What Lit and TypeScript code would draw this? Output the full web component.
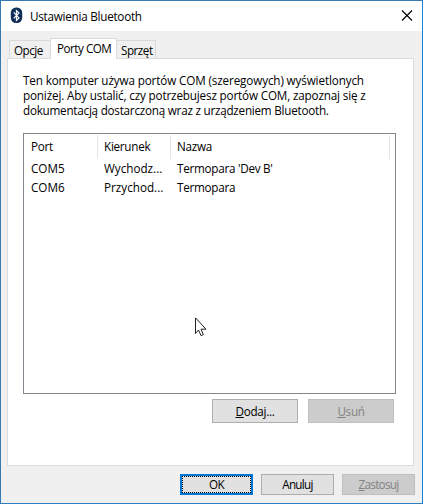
import { LitElement, html, css } from "lit";
import { customElement } from "lit/decorators.js";

@customElement("app-root")
export class AppRoot extends LitElement {
  static styles = css`
    :host {
      display: block;
      width: 423px;
      height: 504px;
      font: 11.7px/15px "Open Sans", "Noto Sans", sans-serif;
      letter-spacing: -0.16px;
      color: #000;
      cursor: default;
    }
    * { box-sizing: border-box; }
    .window {
      height: 504px;
      border: 1px solid #1979ca;
      border-color: #3579b5 #1683d8 #2f7fc0 #3579b5;
      background: #f0f0f0;
      display: flex;
      flex-direction: column;
      position: relative;
    }
    .title {
      height: 30px;
      background: #fff;
      display: flex;
      align-items: center;
      padding: 0 9px 0 9px;
      flex: none;
    }
    .title .name { margin-left: 7px; flex: 1; letter-spacing: -0.25px; white-space: nowrap; }
    svg { display: block; flex: none; }
    .logo { margin-bottom: 2px; }
    .tabs { display: flex; align-items: flex-end; padding: 7px 0 0 8px; height: 27px; flex: none; letter-spacing: -0.5px; }
    .tab {
      height: 18px;
      border: 1px solid #d9d9d9;
      border-bottom: 0;
      line-height: 18px;
      padding-left: 4px;
      white-space: nowrap;
    }
    .t1 { width: 41px; border-right: 0; }
    .t3 { width: 39px; border-left: 0; }
    .active {
      width: 67px;
      height: 21px;
      background: #fff;
      padding-left: 6px;
      margin-bottom: -1px;
      line-height: 18px;
      z-index: 1;
    }
    .panel {
      height: 408px;
      width: 407px;
      margin-left: 6px;
      border: 1px solid #dcdcdc;
      background: #fff;
      padding: 14px 0 0 15px;
      flex: none;
    }
    .line { height: 15px; white-space: nowrap; }
    .first { letter-spacing: -0.13px; }
    .tight { letter-spacing: -0.24px; }
    .list {
      margin-top: 15px;
      width: 373px;
      height: 261px;
      border: 1px solid #828790;
      padding-top: 1px;
    }
    .row { display: grid; grid-template-columns: 74px 73px 219px; height: 19px; line-height: 19px; white-space: nowrap; letter-spacing: -0.27px; }
    .row span { padding-left: 7px; }
    .row span + span { padding-left: 6px; }
    .row .wide { letter-spacing: 0; }
    .head { height: 24px; line-height: 23px; }
    .head span { border-right: 1px solid #e5e5e5; }
    .actions { display: flex; gap: 10px; margin: 5px 0 0 189px; letter-spacing: -0.3px; }
    .btn {
      border: 1px solid #adadad;
      background: #e1e1e1;
      display: flex;
      align-items: center;
      justify-content: center;
      width: 73px;
      height: 21px;
      white-space: pre;
    }
    .actions .btn { width: 86px; height: 24px; }
    .off { background: #ccc; border-color: #bfbfbf; color: #838383; }
    .default { border: 2px solid #0078d7; padding: 0; }
    .focus { width: 100%; height: 100%; border: 1px dotted #000; display: flex; align-items: center; justify-content: center; }
    .footer { display: flex; gap: 8px; margin: 8px 0 0 179px; letter-spacing: -0.7px; }
    u { text-underline-offset: 1px; text-decoration-thickness: 1px; text-decoration-skip-ink: none; }
    .pointer { position: absolute; left: 193px; top: 316px; }
  `;

  render() {
    return html`
      <div class="window">
        <div class="title">
          <svg class="logo" width="13" height="17" viewBox="0 0 13 17">
            <rect x="0.8" y="0.6" width="11.4" height="15.4" rx="5.2" fill="#0d2d58" />
            <path d="M3.7 5.4L9 11L6.4 13.4V3.5L9 6L3.7 11.4" fill="none" stroke="#fff" stroke-width="1.1" />
          </svg>
          <span class="name">Ustawienia Bluetooth</span>
          <svg width="14" height="12" viewBox="0 0 14 12">
            <path d="M3 .5L13 10.5M13 .5L3 10.5" stroke="#000" stroke-width="1.1" />
          </svg>
        </div>
        <div class="tabs">
          <div class="tab t1">Opcje</div>
          <div class="tab active">Porty COM</div>
          <div class="tab t3">Sprzęt</div>
        </div>
        <div class="panel">
          <div class="line first"><span>Ten komputer używa portów COM (szeregowych) wyświetlonych</span></div>
          <div class="line"><span>poniżej. Aby ustalić, czy potrzebujesz portów COM, zapoznaj się z</span></div>
          <div class="line tight"><span>dokumentacją dostarczoną wraz z urządzeniem Bluetooth.</span></div>
          <div class="list">
            <div class="row head"><span>Port</span><span>Kierunek</span><span>Nazwa</span></div>
            <div class="row"><span class="wide">COM5</span><span class="wide">Wychodz...</span><span>Termopara 'Dev B'</span></div>
            <div class="row"><span class="wide">COM6</span><span class="wide">Przychod...</span><span>Termopara</span></div>
          </div>
          <div class="actions">
            <div class="btn"><u>D</u>odaj...</div>
            <div class="btn off"><u>U</u>suń</div>
          </div>
        </div>
        <div class="footer">
          <div class="btn default"><div class="focus">OK</div></div>
          <div class="btn">Anuluj</div>
          <div class="btn off"><u>Z</u>astosuj</div>
        </div>
        <svg class="pointer" width="13" height="20" viewBox="0 0 13 20">
          <path d="M1.5 .9V16.5L4.5 13L7 18.6L9.4 17.6L7 12.2H12Z" fill="#fff" stroke="#222" stroke-width="1" />
        </svg>
      </div>
    `;
  }
}
